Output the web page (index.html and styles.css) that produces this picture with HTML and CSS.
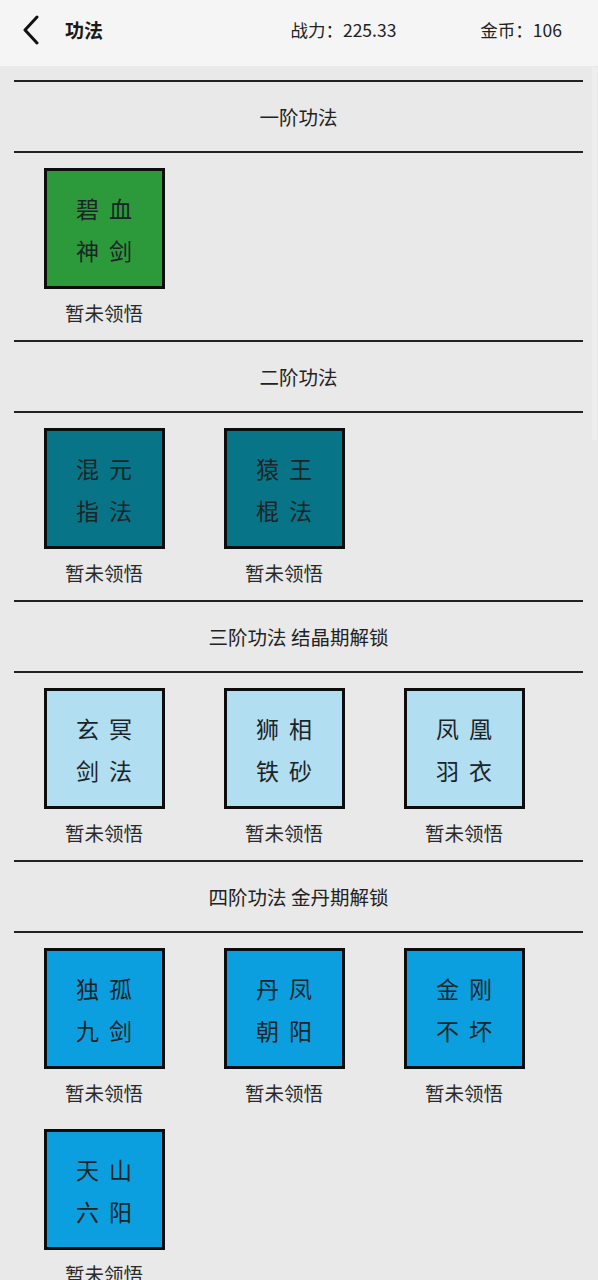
FILE: index.html
```html
<!DOCTYPE html>
<html lang="zh-CN">
<head>
<meta charset="utf-8">
<title>功法</title>
<link rel="stylesheet" href="styles.css">
</head>
<body>
<header class="topbar">
  <svg class="back" width="18" height="30" viewBox="0 0 18 30"><polyline points="15,2 3,15 15,28" fill="none" stroke="#111" stroke-width="3" stroke-linecap="round" stroke-linejoin="round"/></svg>
  <div class="title">功法</div>
  <div class="stats">
    <span class="stat">战力：225.33</span>
    <span class="stat">金币：106</span>
  </div>
</header>
<main class="content">
  <section class="tier">
    <div class="tier-head">一阶功法</div>
    <div class="grid">
      <div class="item"><div class="card green"><div class="ln">碧血</div><div class="ln">神剑</div></div><div class="label">暂未领悟</div></div>
    </div>
  </section>
  <section class="tier">
    <div class="tier-head">二阶功法</div>
    <div class="grid">
      <div class="item"><div class="card teal"><div class="ln">混元</div><div class="ln">指法</div></div><div class="label">暂未领悟</div></div>
      <div class="item"><div class="card teal"><div class="ln">猿王</div><div class="ln">棍法</div></div><div class="label">暂未领悟</div></div>
    </div>
  </section>
  <section class="tier">
    <div class="tier-head">三阶功法 结晶期解锁</div>
    <div class="grid">
      <div class="item"><div class="card sky"><div class="ln">玄冥</div><div class="ln">剑法</div></div><div class="label">暂未领悟</div></div>
      <div class="item"><div class="card sky"><div class="ln">狮相</div><div class="ln">铁砂</div></div><div class="label">暂未领悟</div></div>
      <div class="item"><div class="card sky"><div class="ln">凤凰</div><div class="ln">羽衣</div></div><div class="label">暂未领悟</div></div>
    </div>
  </section>
  <section class="tier">
    <div class="tier-head">四阶功法 金丹期解锁</div>
    <div class="grid">
      <div class="item"><div class="card blue"><div class="ln">独孤</div><div class="ln">九剑</div></div><div class="label">暂未领悟</div></div>
      <div class="item"><div class="card blue"><div class="ln">丹凤</div><div class="ln">朝阳</div></div><div class="label">暂未领悟</div></div>
      <div class="item"><div class="card blue"><div class="ln">金刚</div><div class="ln">不坏</div></div><div class="label">暂未领悟</div></div>
      <div class="item"><div class="card blue"><div class="ln">天山</div><div class="ln">六阳</div></div><div class="label">暂未领悟</div></div>
    </div>
  </section>
</main>
<div class="scrollbar"></div>
</body>
</html>
```

FILE: styles.css
```css
html, body {
  margin: 0;
  padding: 0;
}
body {
  background: #e9e9e9;
  font-family: "Noto Sans CJK SC", "Noto Sans", sans-serif;
  color: #222;
}
.topbar {
  height: 66px;
  background: #f5f5f5;
  display: flex;
  align-items: center;
  padding: 0 36px 7px 22px;
  box-sizing: border-box;
}
.back {
  display: block;
  margin-top: 1px;
}
.title {
  margin-left: 25px;
  font-size: 19px;
  font-weight: 700;
  color: #1a1a1a;
  line-height: 1;
}
.stats {
  margin-left: auto;
  display: flex;
  gap: 84px;
}
.stat {
  font-size: 17.5px;
  color: #222;
  line-height: 1;
}
.content {
  padding: 14px 15px 0 14px;
}
.tier-head {
  border-top: 2px solid #222;
  border-bottom: 2px solid #222;
  height: 69px;
  display: flex;
  align-items: center;
  justify-content: center;
  font-size: 19.5px;
  color: #222;
}
.tier + .tier {
  border-top: 2px solid #222;
}
.tier + .tier .tier-head {
  border-top: none;
}
.grid {
  display: grid;
  grid-template-columns: repeat(3, 180px);
  row-gap: 24px;
  padding: 15px 0 15px;
}
.item {
  display: flex;
  flex-direction: column;
  align-items: center;
}
.card {
  width: 121px;
  height: 121px;
  box-sizing: border-box;
  border: 3px solid #0d0d0d;
  display: flex;
  flex-direction: column;
  justify-content: center;
  align-items: center;
}
.ln {
  font-size: 23px;
  line-height: 42px;
  letter-spacing: 10px;
  margin-right: -10px;
  color: #1b2426;
}
.green { background: #2c9a3b; }
.teal { background: #077487; }
.sky { background: #b2def1; }
.blue { background: #0b9fdf; }
.label {
  margin-top: 12px;
  line-height: 24px;
  font-size: 19.5px;
  color: #2a2a2a;
}
.scrollbar {
  position: absolute;
  top: 67px;
  right: 1px;
  width: 5px;
  height: 373px;
  background: #eeeeee;
}
```
